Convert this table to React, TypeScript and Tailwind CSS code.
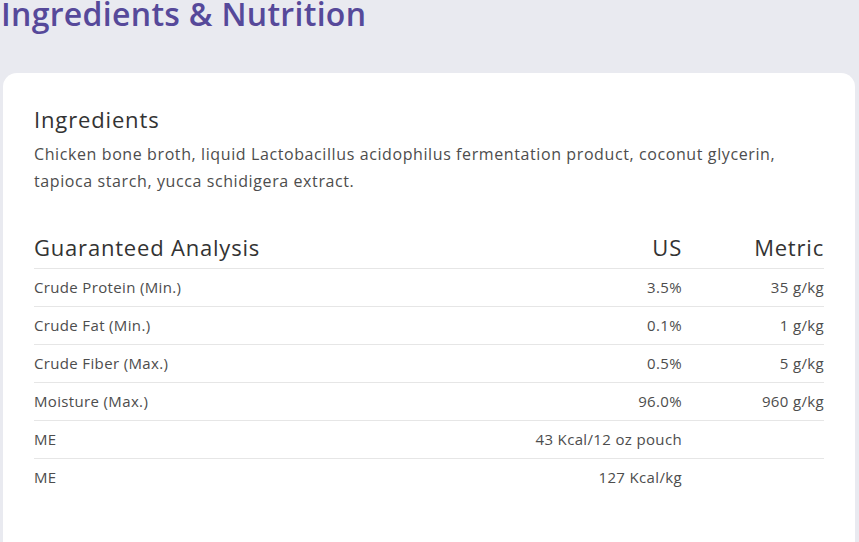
const rows = [
  { label: "Crude Protein (Min.)", us: "3.5%", metric: "35 g/kg" },
  { label: "Crude Fat (Min.)", us: "0.1%", metric: "1 g/kg" },
  { label: "Crude Fiber (Max.)", us: "0.5%", metric: "5 g/kg" },
  { label: "Moisture (Max.)", us: "96.0%", metric: "960 g/kg" },
  { label: "ME", us: "43 Kcal/12 oz pouch", metric: "" },
  { label: "ME", us: "127 Kcal/kg", metric: "" },
]

export default function App() {
  return (
    <div
      className="h-[542px] w-[859px] overflow-hidden bg-[#e9eaf0]"
      style={{ fontFamily: "'Open Sans', Lato, sans-serif" }}
    >
      <h1 className="-mt-[7px] pl-[1px] text-[32px] leading-[42px] font-semibold tracking-[0.3px] text-[#56499a]">
        Ingredients &amp; Nutrition
      </h1>

      <div className="mt-[38px] ml-[3px] mr-[4px] rounded-[14px] bg-white px-[31px] pt-[31px] pb-[60px]">
        <h2 className="text-[22px] leading-[30px] tracking-[0.85px] text-[#333]">Ingredients</h2>
        <p className="mt-[7px] text-[16px] leading-[27px] tracking-[0.6px] text-[#4d4d4d]">
          Chicken bone broth, liquid Lactobacillus acidophilus fermentation product, coconut glycerin,
          <br />
          tapioca starch, yucca schidigera extract.
        </p>

        <table className="mt-[37px] w-full border-collapse">
          <thead>
            <tr className="border-b border-[#e6e6e6]">
              <th className="pb-[6px] text-left text-[22px] leading-[30px] font-normal tracking-[0.8px] text-[#333]">
                Guaranteed Analysis
              </th>
              <th className="pb-[6px] text-right text-[22px] leading-[30px] font-normal tracking-[0.8px] text-[#333]">
                US
              </th>
              <th className="w-[142px] pb-[6px] text-right text-[22px] leading-[30px] font-normal tracking-[0.8px] text-[#333]">
                Metric
              </th>
            </tr>
          </thead>
          <tbody>
            {rows.map((r, i) => (
              <tr
                key={i}
                className={`h-[38px] text-[15px] tracking-[0.35px] text-[#4d4d4d] ${i < rows.length - 1 ? "border-b border-[#e6e6e6]" : ""}`}
              >
                <td className="pb-[1px] text-left">{r.label}</td>
                <td className="pb-[1px] text-right">{r.us}</td>
                <td className="pb-[1px] text-right">{r.metric}</td>
              </tr>
            ))}
          </tbody>
        </table>
      </div>
    </div>
  )
}
